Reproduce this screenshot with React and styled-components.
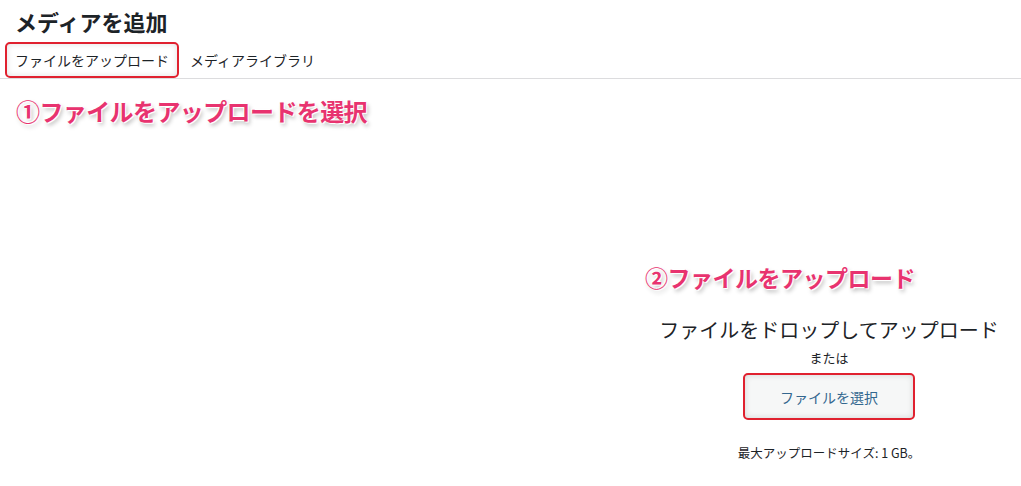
import React from "react";
import styled, { createGlobalStyle } from "styled-components";

const GlobalStyle = createGlobalStyle`
  html, body {
    margin: 0;
    padding: 0;
    background: #fff;
  }
  body {
    font-family: "Noto Sans CJK JP", "Noto Sans", sans-serif;
    color: #1d2327;
  }
`;

const Frame = styled.div`
  width: 1021px;
  height: 486px;
  overflow: hidden;
  background: #fff;
`;

const Title = styled.h1`
  margin: 0;
  padding: 0 15px;
  height: 42px;
  font-size: 22px;
  line-height: 42px;
  font-weight: 700;
  color: #1d2327;
`;

const Tabs = styled.div`
  display: flex;
  align-items: stretch;
  gap: 7px;
  height: 36px;
  padding-left: 5px;
  border-bottom: 1px solid #dcdcde;
`;

const Tab = styled.div`
  display: flex;
  align-items: center;
  box-sizing: border-box;
  padding: 0 ${(p) => (p.$active ? "8px" : "2px")};
  font-size: 14px;
  color: #1d2327;
  border: ${(p) => (p.$active ? "2px solid #e0212f" : "2px solid transparent")};
  border-radius: 5px;
  box-shadow: ${(p) => (p.$active ? "inset 0 0 6px rgba(0,0,0,0.12)" : "none")};
`;

const Note = styled.div`
  font-size: ${(p) => p.$size}px;
  line-height: ${(p) => p.$line}px;
  font-weight: 700;
  color: #e8336f;
  letter-spacing: ${(p) => p.$spacing}px;
  white-space: nowrap;
  text-shadow:
    0 0 2px #fff,
    1px 1px 0 #fff,
    -1px -1px 0 #fff,
    2px 3px 4px rgba(0, 0, 0, 0.28);
`;

const FirstNote = styled(Note)`
  margin: 15px 0 0 16px;
`;

const DropArea = styled.div`
  display: flex;
  flex-direction: column;
  align-items: center;
  width: 368px;
  margin: 133px 0 0 645px;
`;

const SecondNote = styled(Note)`
  align-self: flex-start;
`;

const DropText = styled.p`
  margin: 23px 0 0;
  font-size: 20px;
  line-height: 28px;
  color: #1d2327;
  white-space: nowrap;
`;

const OrText = styled.p`
  margin: 4px 0 0;
  font-size: 13px;
  line-height: 20px;
  color: #1d2327;
`;

const SelectButton = styled.button`
  margin-top: 5px;
  width: 172px;
  height: 47px;
  box-sizing: border-box;
  border: 2px solid #e0212f;
  border-radius: 5px;
  background: #f6f7f7;
  box-shadow: inset 0 0 6px rgba(0, 0, 0, 0.14);
  font-family: "Noto Sans CJK JP", "Noto Sans", sans-serif;
  font-size: 14px;
  color: #33678f;
  cursor: pointer;
`;

const MaxSize = styled.p`
  margin: 24px 0 0;
  font-size: 12.5px;
  line-height: 18px;
  color: #1d2327;
  white-space: nowrap;
`;

export default function App() {
  return (
    <Frame>
      <GlobalStyle />
      <Title>メディアを追加</Title>
      <Tabs>
        <Tab $active>ファイルをアップロード</Tab>
        <Tab>メディアライブラリ</Tab>
      </Tabs>
      <FirstNote $size={24} $line={34} $spacing={-0.6}>①ファイルをアップロードを選択</FirstNote>
      <DropArea>
        <SecondNote $size={23} $line={32} $spacing={-0.5}>②ファイルをアップロード</SecondNote>
        <DropText>ファイルをドロップしてアップロード</DropText>
        <OrText>または</OrText>
        <SelectButton>ファイルを選択</SelectButton>
        <MaxSize>最大アップロードサイズ: 1 GB。</MaxSize>
      </DropArea>
    </Frame>
  );
}
